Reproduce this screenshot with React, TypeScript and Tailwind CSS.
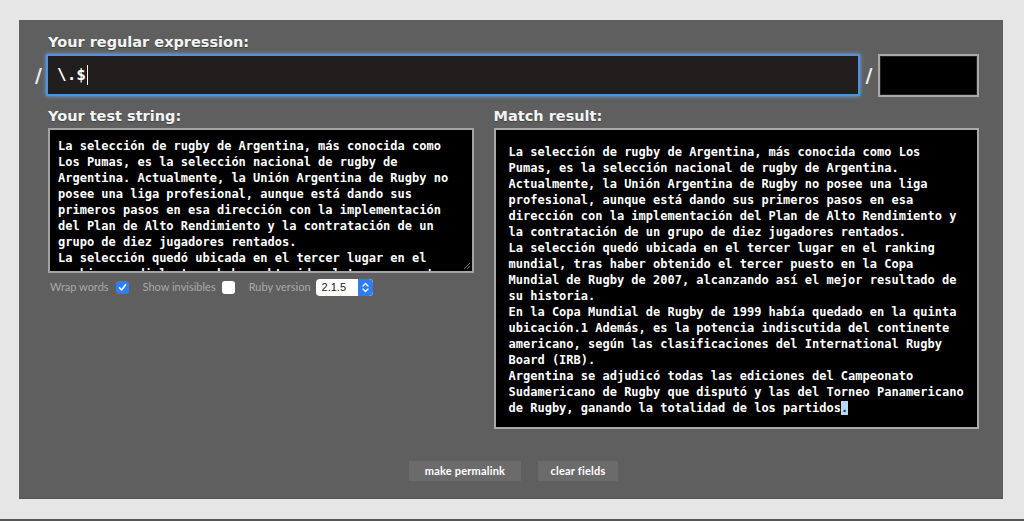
import React from 'react';

const TEST_LINES = [
  'La selección de rugby de Argentina, más conocida como',
  'Los Pumas, es la selección nacional de rugby de',
  'Argentina. Actualmente, la Unión Argentina de Rugby no',
  'posee una liga profesional, aunque está dando sus',
  'primeros pasos en esa dirección con la implementación',
  'del Plan de Alto Rendimiento y la contratación de un',
  'grupo de diez jugadores rentados.',
  'La selección quedó ubicada en el tercer lugar en el',
  'ranking mundial, tras haber obtenido el tercer puesto en',
];

const MATCH_LINES = [
  'La selección de rugby de Argentina, más conocida como Los',
  'Pumas, es la selección nacional de rugby de Argentina.',
  'Actualmente, la Unión Argentina de Rugby no posee una liga',
  'profesional, aunque está dando sus primeros pasos en esa',
  'dirección con la implementación del Plan de Alto Rendimiento y',
  'la contratación de un grupo de diez jugadores rentados.',
  'La selección quedó ubicada en el tercer lugar en el ranking',
  'mundial, tras haber obtenido el tercer puesto en la Copa',
  'Mundial de Rugby de 2007, alcanzando así el mejor resultado de',
  'su historia.',
  'En la Copa Mundial de Rugby de 1999 había quedado en la quinta',
  'ubicación.1 Además, es la potencia indiscutida del continente',
  'americano, según las clasificaciones del International Rugby',
  'Board (IRB).',
  'Argentina se adjudicó todas las ediciones del Campeonato',
  'Sudamericano de Rugby que disputó y las del Torneo Panamericano',
];

const label = "font-['DejaVu_Sans',sans-serif] font-bold text-[14.5px] leading-[18px] text-[#f4f4f4] tracking-[0] [text-shadow:0_1px_1px_rgba(0,0,0,0.35)]";
const mono = "font-['DejaVu_Sans_Mono',monospace] font-bold text-[12px] leading-[16px] text-white whitespace-pre";

export default function App() {
  return (
    <div className="h-[521px] w-[1024px] bg-[#e6e6e6] flex flex-col overflow-hidden">
      <div className="mt-[20px] ml-[19px] w-[984px] h-[479px] bg-[#5f5f5f] border-b border-[#555] pl-[12px] pr-[24px] pt-[13px] flex flex-col">
        <div className={`${label} ml-[17px] h-[21px]`}>Your regular expression:</div>
        <div className="flex items-center h-[42px]">
          <span className="w-[15px] text-center font-['DejaVu_Sans',sans-serif] font-bold text-[19px] text-[#eee]">/</span>
          <div className="flex-1 h-[42px] bg-[#221e1e] border-2 border-[#4f92de] shadow-[0_0_4px_#6aa8f0] flex items-center pl-[9px]">
            <span className="font-['DejaVu_Sans_Mono',monospace] font-bold text-[16px] text-white">\.$</span>
            <span className="w-[1px] h-[20px] bg-white ml-[1px]" />
          </div>
          <span className="w-[18px] text-center font-['DejaVu_Sans',sans-serif] font-bold text-[19px] text-[#eee]">/</span>
          <div className="w-[101px] h-[43px] bg-black border-2 border-[#a9a9a9] shadow-[inset_0_0_0_1px_#222]" />
        </div>

        <div className="flex gap-[20px] ml-[17px] mt-[11px]">
          <div className="w-[426px] flex flex-col">
            <div className={`${label} h-[21px]`}>Your test string:</div>
            <div className="relative h-[145px] bg-black border-2 border-[#a3a3a3] overflow-hidden pl-[8px] pt-[8px]">
              {TEST_LINES.map((l, i) => (
                <div key={i} className={mono}>{l}</div>
              ))}
              <svg className="absolute right-[1px] bottom-[1px]" width="9" height="9" viewBox="0 0 9 9">
                <path d="M8 2 L2 8 M8 5 L5 8" stroke="#777" strokeWidth="1" />
              </svg>
            </div>
            <div className="flex items-center h-[26px] mt-[1px] pl-[2px] font-['Lato',sans-serif] text-[11px] text-[#a9a9a9]">
              <span>Wrap words</span>
              <span className="ml-[7px] w-[13px] h-[13px] rounded-[3px] bg-[#2f7df5] flex items-center justify-center">
                <svg width="9" height="9" viewBox="0 0 9 9">
                  <path d="M1.5 4.8 L3.6 7 L7.6 1.8" stroke="white" strokeWidth="1.6" fill="none" strokeLinecap="round" strokeLinejoin="round" />
                </svg>
              </span>
              <span className="ml-[14px]">Show invisibles</span>
              <span className="ml-[6px] w-[13px] h-[13px] rounded-[3px] bg-white" />
              <span className="ml-[14px]">Ruby version</span>
              <span className="ml-[5px] w-[57px] h-[17px] rounded-[4px] bg-white flex items-center overflow-hidden">
                <span className="flex-1 pl-[6px] text-[11px] text-[#222] font-['Liberation_Sans',sans-serif]">2.1.5</span>
                <span className="w-[15px] h-[17px] bg-[#2f7df5] rounded-r-[4px] flex items-center justify-center">
                  <svg width="7" height="11" viewBox="0 0 7 11">
                    <path d="M1 4 L3.5 1.5 L6 4 M1 7 L3.5 9.5 L6 7" stroke="white" strokeWidth="1.3" fill="none" strokeLinecap="round" strokeLinejoin="round" />
                  </svg>
                </span>
              </span>
            </div>
          </div>

          <div className="w-[486px] flex flex-col">
            <div className={`${label} h-[21px]`}>Match result:</div>
            <div className="h-[301px] bg-black border-2 border-[#a9a9a9] pl-[13px] pt-[14px] overflow-hidden">
              {MATCH_LINES.map((l, i) => (
                <div key={i} className={mono}>{l}</div>
              ))}
              <div className={mono}>
                de Rugby, ganando la totalidad de los partidos<span className="bg-[#b9d7f7] text-[#333]">.</span>
              </div>
            </div>
          </div>
        </div>

        <div className="flex justify-center gap-[17px] mt-[32px] ml-[17px]">
          <button className="h-[20px] w-[112px] bg-[#6b6b6b] text-white font-['Lato',sans-serif] font-bold text-[11px] tracking-[0.2px]">make permalink</button>
          <button className="h-[20px] w-[80px] bg-[#6b6b6b] text-white font-['Lato',sans-serif] font-bold text-[11px] tracking-[0.2px]">clear fields</button>
        </div>
      </div>
      <div className="flex-1" />
      <div className="h-[2px] bg-[#555]" />
    </div>
  );
}
